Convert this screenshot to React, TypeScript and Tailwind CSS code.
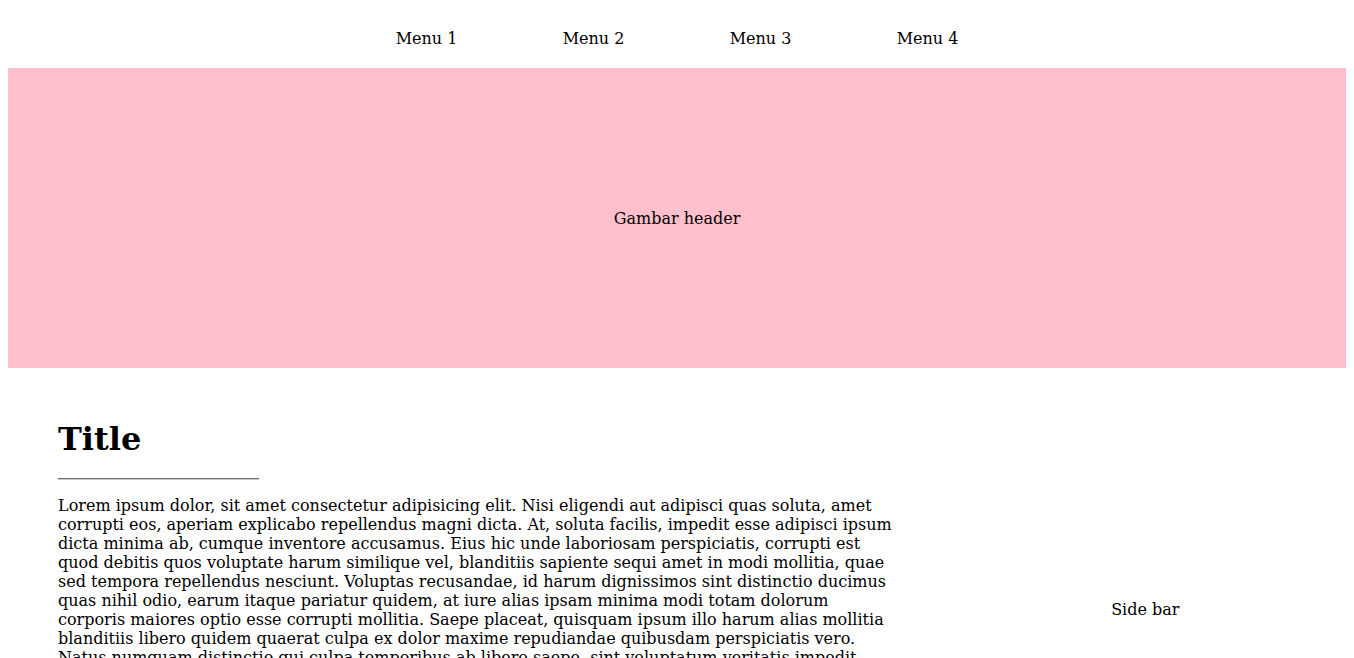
const menus = ["Menu 1", "Menu 2", "Menu 3", "Menu 4"]

const LOREM =
  "Lorem ipsum dolor, sit amet consectetur adipisicing elit. Nisi eligendi aut adipisci quas soluta, amet corrupti eos, aperiam explicabo repellendus magni dicta. At, soluta facilis, impedit esse adipisci ipsum dicta minima ab, cumque inventore accusamus. Eius hic unde laboriosam perspiciatis, corrupti est quod debitis quos voluptate harum similique vel, blanditiis sapiente sequi amet in modi mollitia, quae sed tempora repellendus nesciunt. Voluptas recusandae, id harum dignissimos sint distinctio ducimus quas nihil odio, earum itaque pariatur quidem, at iure alias ipsam minima modi totam dolorum corporis maiores optio esse corrupti mollitia. Saepe placeat, quisquam ipsum illo harum alias mollitia blanditiis libero quidem quaerat culpa ex dolor maxime repudiandae quibusdam perspiciatis vero. Natus numquam distinctio qui culpa temporibus ab libero saepe, sint voluptatum veritatis impedit consequuntur accusantium tempore nobis dolores eveniet. Quibusdam rerum, ipsa sequi quos obcaecati ea neque dolorem iste atque nemo facere exercitationem, dolor modi laudantium. Eaque alias fugiat aspernatur commodi provident eos esse animi cumque, suscipit quia magnam nesciunt necessitatibus sapiente ab officia, aliquid tenetur molestias accusamus voluptatem ratione doloremque. Dolorum porro ipsum odit minus delectus, nulla sunt aut laborum harum vitae eum fugit voluptates quo accusantium repellendus. Ad illum officiis tempora sequi, quaerat consequatur incidunt provident magni est dolores optio blanditiis itaque eius labore amet."

export default function App() {
  return (
    <div className="bg-white p-2 pt-0 text-black font-['DejaVu_Serif',serif] text-[16px] leading-[19px]">
      {/* NAV */}
      <nav className="h-[68px] pt-2 flex items-center justify-center">
        {menus.map((m) => (
          <a key={m} className="w-[167px] text-center">
            {m}
          </a>
        ))}
      </nav>

      {/* HEADER IMAGE */}
      <header className="h-[300px] bg-[#ffc0cb] flex items-center justify-center">
        Gambar header
      </header>

      {/* MAIN */}
      <main className="flex">
        <section className="w-[70%] px-[50px] pt-[53px] pb-[50px]">
          <h1 className="text-[32px] leading-[37px] font-bold">Title</h1>
          <hr className="w-[201px] mt-[20px] border-0 border-t border-b border-t-[#6e6e6e] border-b-[#c8c8c8]" />
          <p className="mt-[16px]">{LOREM}</p>
        </section>
        <aside className="w-[30%] flex items-center justify-center">Side bar</aside>
      </main>
    </div>
  )
}
